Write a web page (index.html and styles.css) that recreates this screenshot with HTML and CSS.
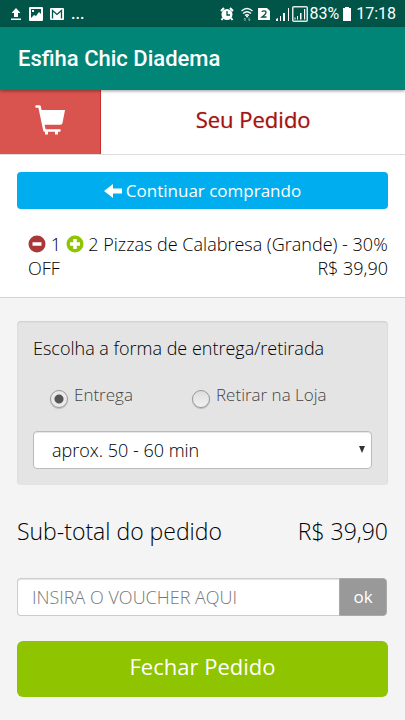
FILE: index.html
```html
<!DOCTYPE html>
<html lang="pt-BR">
<head>
<meta charset="utf-8">
<meta name="viewport" content="width=device-width, initial-scale=1">
<title>Esfiha Chic Diadema</title>
<link rel="stylesheet" href="styles.css">
</head>
<body>
<div class="status">
  <div class="status-left">
    <svg width="12" height="14" viewBox="0 0 12 14" fill="#fff"><path d="M6 1 10.500 6H8v4H4V6H1.500zM1 11.500h10v1.500H1z"/></svg>
    <svg width="14" height="14" viewBox="0 0 14 14"><path fill="#fff" fill-rule="evenodd" d="M1 0h12q1 0 1 1v12q0 1-1 1H1q-1 0-1-1V1q0-1 1-1zM2 2v9l3-3 2 1 3-4 2 2V2zM3 3h2v2H3z"/></svg>
    <svg width="14" height="14" viewBox="0 0 14 14"><rect y="1" width="14" height="12" rx="1" fill="#fff"/><path d="M2.500 11.500V3.500L7 7.500l4.500-4v8" fill="none" stroke="#005548" stroke-width="1.300"/></svg>
    <span class="more">...</span>
  </div>
  <div class="status-right">
    <svg width="14" height="14" viewBox="0 0 14 14"><circle cx="7" cy="7.500" r="5.500" fill="#fff"/><path d="M1 4 4 1M13 4l-3-3M3 11l-1.500 2M11 11l1.500 2" stroke="#fff" stroke-width="2"/><path d="M7 4v4h3" fill="none" stroke="#005548" stroke-width="1.300"/></svg>
    <svg class="wifi" width="12" height="14" viewBox="0 0 12 14"><path d="M.5 4q5.500-5 11 0M2 6.500q4-3.500 8 0M4 8.500q2-1.500 4 0" fill="none" stroke="#fff" stroke-width="1.300"/><circle cx="6" cy="9.500" r="1" fill="#fff"/><path d="M4 14v-3M2.800 12.200 4 11M8 10.500v3M9.200 12.500 8 14" stroke="#8fb5ae" fill="none"/></svg>
    <svg class="sim" width="12" height="14" viewBox="0 0 12 14"><path d="M0 1h9l3 3v9H0z" fill="#fff"/><path d="M4 5q0-1.200 2-1.200T8 5.500Q8 7 4 10h4.500" fill="none" stroke="#005548" stroke-width="1.300"/></svg>
    <svg class="signal" width="14" height="15" viewBox="0 0 14 15"><path d="M0 15v-2l2-1v3zM4 15v-5h1v5zM7 15V7h2v8zM12 15V2h1v13z" fill="#fff"/></svg>
    <svg width="16" height="16" viewBox="0 0 16 16"><rect x=".75" y=".75" width="14.500" height="14.500" rx="1" fill="none" stroke="#dce9e7" stroke-width="1.500"/><path d="M2.500 13.500v-2h1v2zM5 13.500V10h1v3.500zM8 13.500V7h1.500v6.500zM12 13.500V3h1.200v10.500z" fill="#fff"/></svg>
    <span>83%</span>
    <svg class="battery" width="10" height="14" viewBox="0 0 10 14"><path d="M3 0h4v1h2v13H1V1h2z" fill="#fff"/></svg>
    <span>17:18</span>
  </div>
</div>
<header class="appbar"><h1>Esfiha Chic Diadema</h1></header>
<div class="heading">
  <a class="cart" href="#" aria-label="Carrinho">
    <svg width="30" height="32" viewBox="0 0 30 32"><path d="M1.500 2.500H4.500L9.500 26.500H24.500" fill="none" stroke="#fff" stroke-width="2.600" stroke-linecap="round" stroke-linejoin="round"/><path d="M5 6h25l-2.500 13q-.4 1.700-2 1.700H9z" fill="#fff"/><path d="M10 27v3.500h3V27M20 27v3.500h3V27" fill="#fff"/></svg>
  </a>
  <h2>Seu Pedido</h2>
</div>
<section class="order">
  <a class="continue" href="#">
    <svg width="18" height="16" viewBox="0 0 18 16"><path d="M0 8 9 1v4.500h9v5H9V15z" fill="#fff"/></svg>
    Continuar comprando
  </a>
  <div class="item">
    <button class="step" type="button" aria-label="Remover"><svg width="18" height="18" viewBox="0 0 18 18"><circle cx="9" cy="9" r="8.500" fill="#a93939"/><path d="M4.500 9h9" stroke="#fff" stroke-width="3.500"/></svg></button>
    1
    <button class="step" type="button" aria-label="Adicionar"><svg width="18" height="18" viewBox="0 0 18 18"><circle cx="9" cy="9" r="8.500" fill="#8fc400"/><path d="M4 9h10M9 4v10" stroke="#fff" stroke-width="3.500"/></svg></button>
    2 Pizzas de Calabresa (Grande) - 30% OFF
    <span class="price">R$ 39,90</span>
  </div>
</section>
<main class="checkout">
  <fieldset class="delivery">
    <legend>Escolha a forma de entrega/retirada</legend>
    <div class="options">
      <label><input type="radio" name="modo" checked><span>Entrega</span></label>
      <label><input type="radio" name="modo"><span>Retirar na Loja</span></label>
    </div>
    <div class="select">
      <select aria-label="Prazo"><option>aprox. 50 - 60 min</option></select>
      <svg class="caret" width="6" height="7" viewBox="0 0 6 7"><path d="M0 0h6L3 7z" fill="#333"/></svg>
    </div>
  </fieldset>
  <div class="subtotal"><span>Sub-total do pedido</span><span>R$ 39,90</span></div>
  <form class="voucher">
    <input type="text" placeholder="INSIRA O VOUCHER AQUI" aria-label="Voucher">
    <button type="button">ok</button>
  </form>
  <button class="finish" type="button">Fechar Pedido</button>
</main>
</body>
</html>
```

FILE: styles.css
```css
* { box-sizing: border-box; }

body {
  margin: 0;
  min-height: 100vh;
  background: #f4f4f4;
  color: #000;
  font: 300 18px/24px "Open Sans", sans-serif;
}

svg { display: block; flex: none; }
h1, h2 { margin: 0; }
button, input, select { font: inherit; }

.status {
  display: flex;
  justify-content: space-between;
  align-items: center;
  height: 27px;
  padding: 0 9px 0 10px;
  background: #005548;
  color: #fff;
  font: 400 16px/27px Roboto, sans-serif;
}

.status-left, .status-right { display: flex; align-items: center; }
.status-left { gap: 7px; }
.more { font-weight: 500; }
.wifi { margin-left: 7px; }
.sim { margin-left: 5px; }
.signal { margin: 0 2px 0 6px; }
.status-right span { margin-left: 1px; }
.battery { margin: 0 3px 0 3px; }

.appbar {
  position: relative;
  padding: 18px;
  background: #008577;
  box-shadow: 0 1px 3px rgba(0, 0, 0, .4);
  color: #fff;
}

.appbar h1 { font: 500 22px/27px Roboto, sans-serif; }

.heading {
  display: flex;
  height: 65px;
  border-bottom: 1px solid #ddd;
  background: #fff;
}

.cart {
  display: flex;
  flex: 0 0 25%;
  justify-content: center;
  padding-top: 14px;
  border-right: 1px solid #c9302c;
  background: #d9534f;
}

.heading h2 {
  flex: 1;
  color: #a31515;
  font-size: 22px;
  font-weight: 400;
  line-height: 58px;
  text-align: center;
  text-shadow: 0 0 1px rgba(163, 21, 21, .6);
}

.order {
  padding: 17px;
  border-bottom: 1px solid #d3d3d3;
  background: #fff;
}

.continue {
  display: flex;
  justify-content: center;
  align-items: center;
  gap: 4px;
  height: 37px;
  border-radius: 4px;
  background: #00aeef;
  color: #fff;
  font-size: 17px;
  font-weight: 400;
  text-decoration: none;
}

.item { padding: 23px 0 0 11px; }

.step {
  display: inline-block;
  padding: 0;
  border: 0;
  background: none;
  vertical-align: -2px;
}

.price { float: right; }

.checkout { padding: 23px 17px; }

.delivery {
  margin: 0;
  padding: 15px 16px 16px;
  border: 0;
  border-radius: 4px;
  background: #e4e4e4;
  box-shadow: inset 0 1px 2px rgba(0, 0, 0, .1);
}

.delivery legend { float: left; width: 100%; padding: 0; }

.options {
  display: flex;
  clear: both;
  padding: 23px 0 23px 17px;
}

.options label {
  display: flex;
  align-items: flex-start;
  gap: 6px;
  width: 142px;
  color: #444;
  font-size: 17px;
  white-space: nowrap;
}

.options input {
  flex: none;
  width: 18px;
  height: 18px;
  margin: 7px 0 0;
  border: 1px solid #999;
  border-radius: 50%;
  background: linear-gradient(#ddd, #f2f2f2);
  box-shadow: 0 1px 1px rgba(0, 0, 0, .2);
  appearance: none;
}

.options input:checked {
  background: radial-gradient(circle, #555 4px, #eaeaea 5px);
}

.select { position: relative; }

.select select {
  display: block;
  width: 100%;
  height: 38px;
  padding: 0 18px;
  border: 1px solid #bbb;
  border-radius: 4px;
  background: #fff;
  box-shadow: inset 0 1px 1px rgba(0, 0, 0, .1);
  color: #000;
  appearance: none;
}

.caret { position: absolute; top: 15px; right: 7px; pointer-events: none; }

.subtotal {
  display: flex;
  justify-content: space-between;
  padding: 30px 0 31px;
  font-size: 23px;
  line-height: 32px;
}

.voucher { display: flex; height: 38px; padding-right: 1px; }

.voucher input {
  flex: 1;
  min-width: 0;
  padding: 0 14px;
  border: 1px solid #ccc;
  border-right: 0;
  border-radius: 4px 0 0 4px;
  background: #fff;
  box-shadow: inset 0 1px 1px rgba(0, 0, 0, .1);
}

.voucher input::placeholder { color: #777; opacity: 1; }

.voucher button {
  width: 48px;
  padding: 0;
  border: 1px solid #aaa;
  border-radius: 0 4px 4px 0;
  background: #999;
  color: #fff;
  font-size: 17px;
  font-weight: 400;
}

.finish {
  display: block;
  width: 100%;
  height: 56px;
  margin-top: 25px;
  padding: 0 0 6px;
  border: 0;
  border-radius: 6px;
  background: #8fc400;
  color: #fff;
  font-size: 22px;
  font-weight: 400;
}
```
